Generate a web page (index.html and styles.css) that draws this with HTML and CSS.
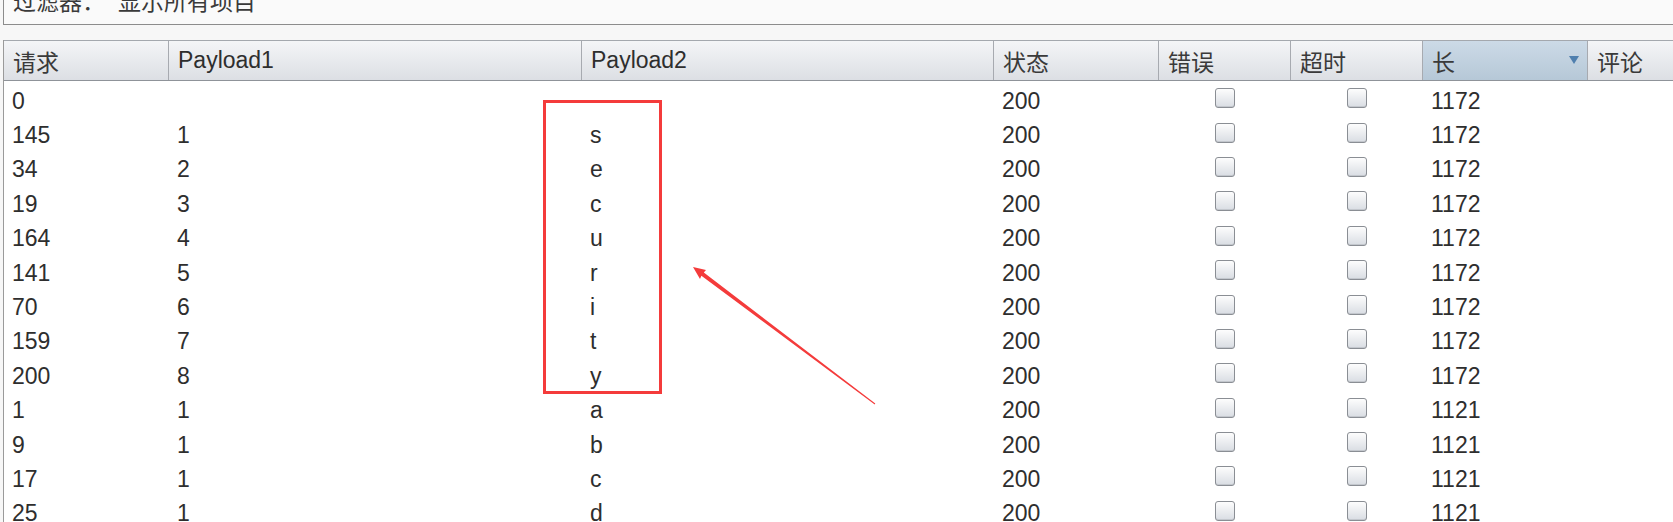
FILE: index.html
```html
<!DOCTYPE html>
<html lang="zh">
<head>
<meta charset="utf-8">
<title>Intruder results</title>
<link rel="stylesheet" href="styles.css">
</head>
<body>
<div class="filter">
  <span class="filter-label">过滤器：</span><span class="filter-value">显示所有项目</span>
</div>
<div class="table">
  <div class="thead">
    <div class="th">请求</div>
    <div class="th">Payload1</div>
    <div class="th">Payload2</div>
    <div class="th">状态</div>
    <div class="th">错误</div>
    <div class="th">超时</div>
    <div class="th th-sorted"><span>长</span><span class="sort-arrow"></span></div>
    <div class="th">评论</div>
  </div>
  <div class="tbody">
    <div class="tr"><div class="td">0</div><div class="td"></div><div class="td"></div><div class="td">200</div><div class="td td-check"><span class="cb"></span></div><div class="td td-check"><span class="cb"></span></div><div class="td">1172</div><div class="td"></div></div>
    <div class="tr"><div class="td">145</div><div class="td">1</div><div class="td">s</div><div class="td">200</div><div class="td td-check"><span class="cb"></span></div><div class="td td-check"><span class="cb"></span></div><div class="td">1172</div><div class="td"></div></div>
    <div class="tr"><div class="td">34</div><div class="td">2</div><div class="td">e</div><div class="td">200</div><div class="td td-check"><span class="cb"></span></div><div class="td td-check"><span class="cb"></span></div><div class="td">1172</div><div class="td"></div></div>
    <div class="tr"><div class="td">19</div><div class="td">3</div><div class="td">c</div><div class="td">200</div><div class="td td-check"><span class="cb"></span></div><div class="td td-check"><span class="cb"></span></div><div class="td">1172</div><div class="td"></div></div>
    <div class="tr"><div class="td">164</div><div class="td">4</div><div class="td">u</div><div class="td">200</div><div class="td td-check"><span class="cb"></span></div><div class="td td-check"><span class="cb"></span></div><div class="td">1172</div><div class="td"></div></div>
    <div class="tr"><div class="td">141</div><div class="td">5</div><div class="td">r</div><div class="td">200</div><div class="td td-check"><span class="cb"></span></div><div class="td td-check"><span class="cb"></span></div><div class="td">1172</div><div class="td"></div></div>
    <div class="tr"><div class="td">70</div><div class="td">6</div><div class="td">i</div><div class="td">200</div><div class="td td-check"><span class="cb"></span></div><div class="td td-check"><span class="cb"></span></div><div class="td">1172</div><div class="td"></div></div>
    <div class="tr"><div class="td">159</div><div class="td">7</div><div class="td">t</div><div class="td">200</div><div class="td td-check"><span class="cb"></span></div><div class="td td-check"><span class="cb"></span></div><div class="td">1172</div><div class="td"></div></div>
    <div class="tr"><div class="td">200</div><div class="td">8</div><div class="td">y</div><div class="td">200</div><div class="td td-check"><span class="cb"></span></div><div class="td td-check"><span class="cb"></span></div><div class="td">1172</div><div class="td"></div></div>
    <div class="tr"><div class="td">1</div><div class="td">1</div><div class="td">a</div><div class="td">200</div><div class="td td-check"><span class="cb"></span></div><div class="td td-check"><span class="cb"></span></div><div class="td">1121</div><div class="td"></div></div>
    <div class="tr"><div class="td">9</div><div class="td">1</div><div class="td">b</div><div class="td">200</div><div class="td td-check"><span class="cb"></span></div><div class="td td-check"><span class="cb"></span></div><div class="td">1121</div><div class="td"></div></div>
    <div class="tr"><div class="td">17</div><div class="td">1</div><div class="td">c</div><div class="td">200</div><div class="td td-check"><span class="cb"></span></div><div class="td td-check"><span class="cb"></span></div><div class="td">1121</div><div class="td"></div></div>
    <div class="tr"><div class="td">25</div><div class="td">1</div><div class="td">d</div><div class="td">200</div><div class="td td-check"><span class="cb"></span></div><div class="td td-check"><span class="cb"></span></div><div class="td">1121</div><div class="td"></div></div>
  </div>
</div>
<div class="highlight"></div>
<svg class="arrow" width="210" height="170" viewBox="680 250 210 170" xmlns="http://www.w3.org/2000/svg">
  <polygon points="693,267 706,270 703.8,272.6 875.3,403.6 874.7,404.4 701.4,275.8 700,279" fill="#f43b3b"/>
</svg>
</body>
</html>
```

FILE: styles.css
```css
html, body {
  margin: 0;
  padding: 0;
}

body {
  width: 1673px;
  height: 522px;
  overflow: hidden;
  position: relative;
  background: #f7f7f7;
  font-family: "Liberation Sans", "Noto Sans CJK SC", sans-serif;
  font-size: 23px;
  color: #2e2e2e;
}

.filter {
  margin-left: 3px;
  height: 24px;
  border-left: 1px solid #8c8c8c;
  border-bottom: 1px solid #8c8c8c;
  background: #fafafa;
  overflow: hidden;
  display: flex;
  align-items: flex-start;
  padding-left: 9px;
  color: #3a3a3a;
}

.filter-label,
.filter-value {
  display: block;
  line-height: 23px;
  margin-top: -11px;
  font-family: "Noto Sans CJK SC", sans-serif;
}

.filter-value {
  margin-left: 13px;
}

.table {
  margin-top: 15px;
  margin-left: 3px;
  border-left: 1px solid #9a9a9a;
  width: 1900px;
}

.thead,
.tr {
  display: grid;
  grid-template-columns: 165px 413px 412px 165px 132px 132px 165px 300px;
}

.thead {
  height: 41px;
  box-sizing: border-box;
  border-top: 1px solid #a4a8ae;
  border-bottom: 1px solid #8f9399;
  background: linear-gradient(#f4f5f7, #dcdfe4);
}

.th {
  box-sizing: border-box;
  padding-left: 9px;
  border-right: 1px solid #a7aab0;
  display: flex;
  align-items: center;
  color: #3a3a3a;
  font-family: "Noto Sans CJK SC", sans-serif;
}

.th:nth-child(2),
.th:nth-child(3) {
  font-family: "Liberation Sans", sans-serif;
  color: #2e2e2e;
}

.th-sorted {
  justify-content: space-between;
  padding-right: 8px;
  background: linear-gradient(#ccdae7, #b6c8d7);
}

.sort-arrow {
  width: 0;
  height: 0;
  border-left: 5px solid transparent;
  border-right: 5px solid transparent;
  border-top: 8px solid #4f7fae;
  margin-top: -2px;
}

.tbody {
  background: #fff;
}

.tr {
  height: 34.4px;
  align-items: center;
}

.td {
  padding-left: 8px;
  padding-top: 6px;
  white-space: nowrap;
  line-height: 1;
}

.td-check {
  padding-left: 0;
  padding-top: 0;
  display: flex;
  justify-content: center;
}

.cb {
  display: block;
  width: 18px;
  height: 18px;
  border: 1px solid #8a8e94;
  border-radius: 3px;
  background: linear-gradient(#fdfdfd, #d9dde3);
  box-shadow: inset 0 -1px 0 #c3c7cd;
}

.highlight {
  position: absolute;
  left: 543px;
  top: 100px;
  width: 113px;
  height: 288px;
  border: 3px solid #f43b3b;
}

.arrow {
  position: absolute;
  left: 680px;
  top: 250px;
}
```
